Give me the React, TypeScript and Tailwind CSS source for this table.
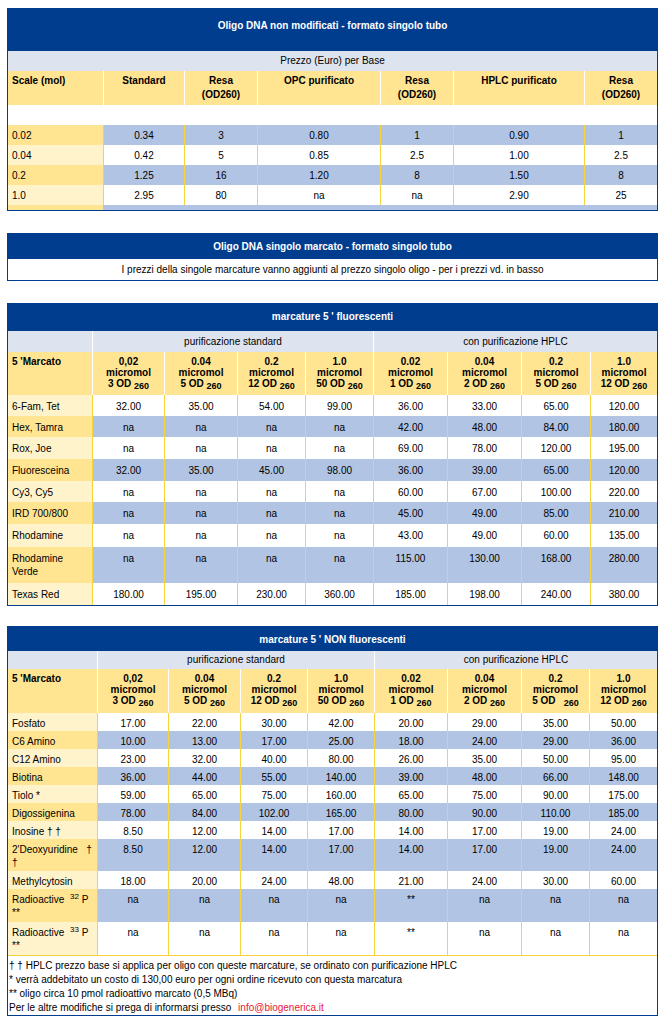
import React from "react";

type Row = { label: React.ReactNode; cells: string[]; blue: boolean; h: string };

const t1Rows: Row[] = [
  { label: "0.02", cells: ["0.34", "3", "0.80", "1", "0.90", "1"], blue: true, h: "h-[20px]" },
  { label: "0.04", cells: ["0.42", "5", "0.85", "2.5", "1.00", "2.5"], blue: false, h: "h-[20px]" },
  { label: "0.2", cells: ["1.25", "16", "1.20", "8", "1.50", "8"], blue: true, h: "h-[20px]" },
  { label: "1.0", cells: ["2.95", "80", "na", "na", "2.90", "25"], blue: false, h: "h-[20px]" },
];

const t3Rows: Row[] = [
  { label: "6-Fam, Tet", cells: ["32.00", "35.00", "54.00", "99.00", "36.00", "33.00", "65.00", "120.00"], blue: false, h: "h-[21px]" },
  { label: "Hex, Tamra", cells: ["na", "na", "na", "na", "42.00", "48.00", "84.00", "180.00"], blue: true, h: "h-[21px]" },
  { label: "Rox, Joe", cells: ["na", "na", "na", "na", "69.00", "78.00", "120.00", "195.00"], blue: false, h: "h-[22px]" },
  { label: "Fluoresceina", cells: ["32.00", "35.00", "45.00", "98.00", "36.00", "39.00", "65.00", "120.00"], blue: true, h: "h-[22px]" },
  { label: "Cy3, Cy5", cells: ["na", "na", "na", "na", "60.00", "67.00", "100.00", "220.00"], blue: false, h: "h-[21px]" },
  { label: "IRD 700/800", cells: ["na", "na", "na", "na", "45.00", "49.00", "85.00", "210.00"], blue: true, h: "h-[22px]" },
  { label: "Rhodamine", cells: ["na", "na", "na", "na", "43.00", "49.00", "60.00", "135.00"], blue: false, h: "h-[23px]" },
  {
    label: (
      <>
        Rhodamine
        <br />
        Verde
      </>
    ),
    cells: ["na", "na", "na", "na", "115.00", "130.00", "168.00", "280.00"],
    blue: true,
    h: "h-[36px]",
  },
  { label: "Texas Red", cells: ["180.00", "195.00", "230.00", "360.00", "185.00", "198.00", "240.00", "380.00"], blue: false, h: "h-[22px]" },
];

const t4Rows: Row[] = [
  { label: "Fosfato", cells: ["17.00", "22.00", "30.00", "42.00", "20.00", "29.00", "35.00", "50.00"], blue: false, h: "h-[18px]" },
  { label: "C6 Amino", cells: ["10.00", "13.00", "17.00", "25.00", "18.00", "24.00", "29.00", "36.00"], blue: true, h: "h-[18px]" },
  { label: "C12 Amino", cells: ["23.00", "32.00", "40.00", "80.00", "26.00", "35.00", "50.00", "95.00"], blue: false, h: "h-[18px]" },
  { label: "Biotina", cells: ["36.00", "44.00", "55.00", "140.00", "39.00", "48.00", "66.00", "148.00"], blue: true, h: "h-[18px]" },
  { label: "Tiolo *", cells: ["59.00", "65.00", "75.00", "160.00", "65.00", "75.00", "90.00", "175.00"], blue: false, h: "h-[18px]" },
  { label: "Digossigenina", cells: ["78.00", "84.00", "102.00", "165.00", "80.00", "90.00", "110.00", "185.00"], blue: true, h: "h-[18px]" },
  { label: "Inosine † †", cells: ["8.50", "12.00", "14.00", "17.00", "14.00", "17.00", "19.00", "24.00"], blue: false, h: "h-[18px]" },
  {
    label: (
      <>
        2'Deoxyuridine&nbsp;&nbsp; †
        <br />†
      </>
    ),
    cells: ["8.50", "12.00", "14.00", "17.00", "14.00", "17.00", "19.00", "24.00"],
    blue: true,
    h: "h-[32px]",
  },
  { label: "Methylcytosin", cells: ["18.00", "20.00", "24.00", "48.00", "21.00", "24.00", "30.00", "60.00"], blue: false, h: "h-[18px]" },
  {
    label: (
      <>
        Radioactive <sup className="ml-[3px] text-[8px]">32</sup> P
        <br />
        **
      </>
    ),
    cells: ["na", "na", "na", "na", "**", "na", "na", "na"],
    blue: true,
    h: "h-[33px]",
  },
  {
    label: (
      <>
        Radioactive <sup className="ml-[3px] text-[8px]">33</sup> P
        <br />
        **
      </>
    ),
    cells: ["na", "na", "na", "na", "**", "na", "na", "na"],
    blue: false,
    h: "h-[33px]",
  },
];

const scales = [
  ["0,02", "3 OD "],
  ["0.04", "5 OD "],
  ["0.2", "12 OD "],
  ["1.0", "50 OD "],
  ["0.02", "1 OD "],
  ["0.04", "2 OD "],
  ["0.2", "5 OD "],
  ["1.0", "12 OD "],
];

function Title({ children, className }: { children: React.ReactNode; className: string }) {
  return (
    <div className={`bg-[#003d8f] text-center text-[10px] font-bold leading-[14px] text-white ${className}`}>
      {children}
    </div>
  );
}

function DataRow({ row, grid, pad }: { row: Row; grid: string; pad: string }) {
  return (
    <div className={`grid ${grid} ${row.h}`}>
      <div className={`pl-[4px] ${pad} ${row.blue ? "bg-[#ffe492]" : "bg-[#fff3cb]"}`}>{row.label}</div>
      {row.cells.map((c, i) => (
        <div
          key={i}
          className={`border-l border-[#f7d43e] text-center ${pad} ${row.blue ? "bg-[#b1c4e4]" : "bg-white"}`}
        >
          {c}
        </div>
      ))}
    </div>
  );
}

function LabelTable({
  title,
  titleCls,
  grid,
  lightH,
  headH,
  rows,
  rowPad,
  wideLast,
}: {
  title: string;
  titleCls: string;
  grid: string;
  lightH: string;
  headH: string;
  rows: Row[];
  rowPad: string;
  wideLast?: boolean;
}) {
  return (
    <>
      <Title className={titleCls}>{title}</Title>
      <div className={`grid ${grid} ${lightH} bg-[#dde4ef] text-[10px] leading-[14px]`}>
        <div />
        <div className="col-span-4 flex items-center justify-center border-l border-white">purificazione standard</div>
        <div className="col-span-4 flex items-center justify-center border-l border-white">con purificazione HPLC</div>
      </div>
      <div className={`grid ${grid} ${headH} bg-[#ffe492] font-bold`}>
        <div className="pl-[4px] pt-[3px] text-[10px] leading-[14px]">5 'Marcato</div>
        {scales.map(([top, od], i) => (
          <div key={i} className="border-l border-white pt-[4px] text-center text-[10px] leading-[11px]">
            {top}
            <br />
            micromol
            <br />
            {wideLast && i === 6 ? "5 OD \u00a0\u00a0" : od}
            <sub className="text-[9px]">260</sub>
          </div>
        ))}
      </div>
      <div className="text-[10px] leading-[13px]">
        {rows.map((r, i) => (
          <DataRow key={i} row={r} grid={grid} pad={rowPad} />
        ))}
      </div>
    </>
  );
}

export default function App() {
  const t1Grid = "grid-cols-[95px_81px_73px_123px_73px_131px_73px]";
  const t3Grid = "grid-cols-[84px_72px_73px_68px_68px_74px_74px_69px_67px]";
  const t4Grid = "grid-cols-[89px_71px_72px_67px_67px_73px_74px_68px_68px]";

  return (
    <div className="min-h-[1024px] bg-white pt-[8px] font-['Liberation_Sans',Arial,sans-serif] text-black">
      {/* Oligo non modificati */}
      <div className="ml-[7px] w-[651px] border border-[#003d8f]">
        <Title className="h-[42px] pt-[10px]">Oligo DNA non modificati - formato singolo tubo</Title>
        <div className="flex h-[20px] items-center justify-center bg-[#dde4ef] text-[10px] leading-[14px]">
          Prezzo (Euro) per Base
        </div>
        <div className={`grid ${t1Grid} h-[34px] bg-[#ffe492] text-[10px] font-bold leading-[14px]`}>
          <div className="pl-[4px] pt-[3px]">Scale (mol)</div>
          <div className="border-l border-white pt-[3px] text-center">Standard</div>
          <div className="border-l border-white pt-[3px] text-center">
            Resa
            <br />
            (OD260)
          </div>
          <div className="border-l border-white pt-[3px] text-center">OPC purificato</div>
          <div className="border-l border-white pt-[3px] text-center">
            Resa
            <br />
            (OD260)
          </div>
          <div className="border-l border-white pt-[3px] text-center">HPLC purificato</div>
          <div className="border-l border-white pt-[3px] text-center">
            Resa
            <br />
            (OD260)
          </div>
        </div>
        <div className="h-[20px] bg-white" />
        <div className="text-[10px] leading-[14px]">
          {t1Rows.map((r, i) => (
            <DataRow key={i} row={r} grid={t1Grid} pad="pt-[4px]" />
          ))}
        </div>
        <div className={`grid ${t1Grid} h-[5px]`}>
          <div className="bg-[#ffe492]" />
          <div className="col-span-6 bg-[#b1c4e4]" />
        </div>
      </div>

      {/* Oligo singolo marcato */}
      <div className="ml-[7px] mt-[22px] w-[651px] border border-[#003d8f]">
        <Title className="h-[25px] pt-[6px]">Oligo DNA singolo marcato - formato singolo tubo</Title>
        <div className="flex h-[21px] items-center justify-center bg-white text-[10px] leading-[14px]">
          I prezzi della singole marcature vanno aggiunti al prezzo singolo oligo - per i prezzi vd. in basso
        </div>
      </div>

      {/* marcature fluorescenti */}
      <div className="ml-[7px] mt-[22px] w-[651px] border border-[#003d8f]">
        <LabelTable
          title="marcature 5 ' fluorescenti"
          titleCls="h-[27px] pt-[6px]"
          grid={t3Grid}
          lightH="h-[21px]"
          headH="h-[43px]"
          rows={t3Rows}
          rowPad="pt-[5px]"
        />
      </div>

      {/* marcature NON fluorescenti */}
      <div className="ml-[7px] mt-[20px] w-[651px] border border-[#003d8f]">
        <LabelTable
          title="marcature 5 ' NON fluorescenti"
          titleCls="h-[24px] pt-[6px]"
          grid={t4Grid}
          lightH="h-[18px]"
          headH="h-[44px]"
          rows={t4Rows}
          rowPad="pt-[4px]"
          wideLast
        />
        <div className="h-[60px] border-t border-[#f7d43e] pl-[1px] pt-[3px] text-[10px] leading-[14px]">
          <p>† † HPLC prezzo base si applica per oligo con queste marcature, se ordinato con purificazione HPLC</p>
          <p>* verrà addebitato un costo di 130,00 euro per ogni ordine ricevuto con questa marcatura</p>
          <p>** oligo circa 10 pmol radioattivo marcato (0,5 MBq)</p>
          <p>
            Per le altre modifiche si prega di informarsi presso{" "}
            <span className="ml-[4px] text-[#e8173a]">info@biogenerica.it</span>
          </p>
        </div>
      </div>
    </div>
  );
}
